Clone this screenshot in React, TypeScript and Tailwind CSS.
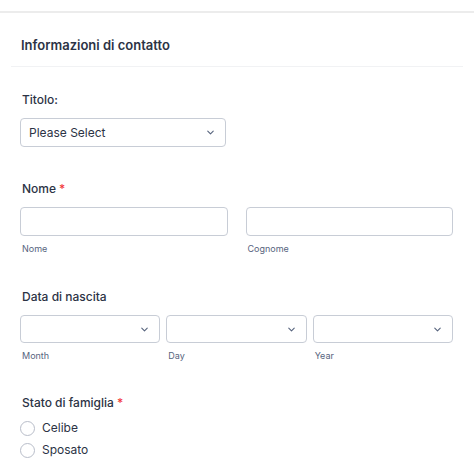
import { ChevronDown } from "lucide-react";

function SelectBox({ text, className = "" }: { text?: string; className?: string }) {
  return (
    <div
      className={`flex items-center justify-between rounded-[4px] border border-[#c8cdd6] bg-white pl-[8px] pr-[9px] ${className}`}
    >
      <span className="text-[12px] text-[#2c3345]">{text}</span>
      <ChevronDown size={11} strokeWidth={2.4} className="text-[#57647e]" />
    </div>
  );
}

function Label({ children, required }: { children: React.ReactNode; required?: boolean }) {
  return (
    <div className="text-[12px] leading-[18px] font-medium text-[#2c3345]">
      {children}
      {required && <span className="text-[#f23a3c] ml-[3px]">*</span>}
    </div>
  );
}

function SubLabel({ children }: { children: React.ReactNode }) {
  return <div className="mt-[7px] pl-[2px] text-[9px] leading-[12px] text-[#57647e]">{children}</div>;
}

function Radio({ label }: { label: string }) {
  return (
    <div className="flex items-center gap-[7px] h-[22px]">
      <span className="w-[15px] h-[15px] rounded-full border border-[#b8bdc9] bg-white" />
      <span className="text-[12px] text-[#2c3345]">{label}</span>
    </div>
  );
}

export default function App() {
  return (
    <div
      className="w-[474px] h-[458px] overflow-hidden bg-white"
      style={{ fontFamily: "Inter, 'Noto Sans', sans-serif" }}
    >
      <div className="h-[11px]" />
      <div className="border-t-2 border-[#ececec]" />

      {/* Header */}
      <div className="mx-[11px] mt-[22px] pb-[11px] border-b border-[#f1f2f4] pl-[10px]">
        <h1 className="text-[13px] leading-[20px] font-semibold text-[#2c3345]">
          Informazioni di contatto
        </h1>
      </div>

      <div className="pl-[20px] pr-[21px]">
        {/* Titolo */}
        <div className="mt-[24px] pl-[2px]">
          <Label>Titolo:</Label>
        </div>
        <SelectBox text="Please Select" className="mt-[9px] h-[29px] w-[206px]" />

        {/* Nome */}
        <div className="mt-[33px] pl-[2px]">
          <Label required>Nome</Label>
        </div>
        <div className="mt-[9px] grid grid-cols-2 gap-[18px]">
          <div>
            <div className="h-[29px] rounded-[4px] border border-[#c8cdd6] bg-white" />
            <SubLabel>Nome</SubLabel>
          </div>
          <div>
            <div className="h-[29px] rounded-[4px] border border-[#c8cdd6] bg-white" />
            <SubLabel>Cognome</SubLabel>
          </div>
        </div>

        {/* Data di nascita */}
        <div className="mt-[33px] pl-[2px]">
          <Label>Data di nascita</Label>
        </div>
        <div className="mt-[9px] grid grid-cols-3 gap-[6px]">
          {["Month", "Day", "Year"].map((s) => (
            <div key={s}>
              <SelectBox className="h-[28px]" />
              <SubLabel>{s}</SubLabel>
            </div>
          ))}
        </div>

        {/* Stato di famiglia */}
        <div className="mt-[32px] pl-[2px]">
          <Label required>Stato di famiglia</Label>
        </div>
        <div className="mt-[5px]">
          <Radio label="Celibe" />
          <Radio label="Sposato" />
        </div>
      </div>
    </div>
  );
}
